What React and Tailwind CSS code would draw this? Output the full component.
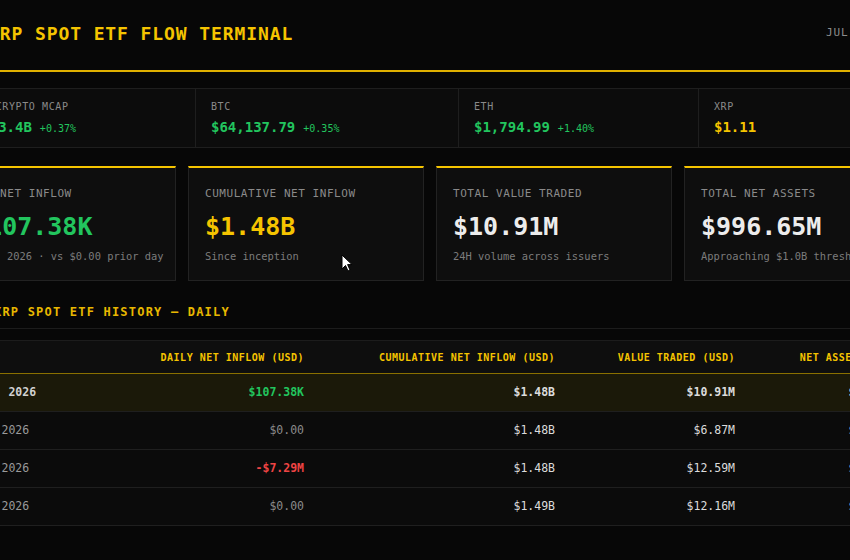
import React from 'react';

const mono = { fontFamily: '"DejaVu Sans Mono", "Liberation Mono", monospace' };

const tickers = [
  { label: 'TOTAL CRYPTO MCAP', value: '$2,413.4B', change: '+0.37%', w: 'w-[254px]', color: 'text-[#22c55e]' },
  { label: 'BTC', value: '$64,137.79', change: '+0.35%', w: 'w-[263px]', color: 'text-[#22c55e]' },
  { label: 'ETH', value: '$1,794.99', change: '+1.40%', w: 'w-[240px]', color: 'text-[#22c55e]' },
  { label: 'XRP', value: '$1.11', change: null, w: 'flex-1', color: 'text-[#f5c400]' },
];

const cards = [
  { label: 'DAILY NET INFLOW', value: '+$107.38K', sub: 'JUL 10, 2026 · vs $0.00 prior day', color: 'text-[#22c55e]' },
  { label: 'CUMULATIVE NET INFLOW', value: '$1.48B', sub: 'Since inception', color: 'text-[#f5c400]' },
  { label: 'TOTAL VALUE TRADED', value: '$10.91M', sub: '24H volume across issuers', color: 'text-[#ececec]' },
  { label: 'TOTAL NET ASSETS', value: '$996.65M', sub: 'Approaching $1.0B threshold', color: 'text-[#ececec]' },
];

const rows = [
  { date: 'JUL 10, 2026', flow: '$107.38K', tone: 'up', cum: '$1.48B', traded: '$10.91M', assets: '$996.65M', latest: true },
  { date: 'JUL 9, 2026', flow: '$0.00', tone: 'flat', cum: '$1.48B', traded: '$6.87M', assets: '$981.20M' },
  { date: 'JUL 8, 2026', flow: '-$7.29M', tone: 'down', cum: '$1.48B', traded: '$12.59M', assets: '$975.44M' },
  { date: 'JUL 7, 2026', flow: '$0.00', tone: 'flat', cum: '$1.49B', traded: '$12.16M', assets: '$990.03M' },
];

const cols = 'grid grid-cols-[150px_230px_251px_180px_169px]';

const flowColor = {
  up: 'text-[#22c55e] font-bold',
  down: 'text-[#ef4444] font-bold',
  flat: 'text-[#8a8a8a]',
};

export default function App() {
  return (
    <div className="relative w-[850px] h-[560px] overflow-hidden bg-[#070707]" style={mono}>
      <div className="w-[980px] -ml-[60px]">
        {/* header */}
        <header className="h-[72px] flex items-center justify-between border-b-2 border-[#e0b000] pb-1">
          <div className="flex items-center gap-4">
            <div className="w-8 h-8 bg-[#f5c400] rounded-sm" />
            <h1 className="text-[18px] font-bold tracking-[0.05em] text-[#f5c400]">XRP SPOT ETF FLOW TERMINAL</h1>
          </div>
          <div className="pr-1 text-[11px] tracking-[0.08em] text-[#8c8c8c]">JUL 10, 2026</div>
        </header>

        {/* ticker strip */}
        <div className="mt-4 h-[60px] flex border border-[#1e1e1e] bg-[#0c0c0c]">
          {tickers.map((t, i) => (
            <div key={t.label} className={`${t.w} px-[15px] pt-[11px] ${i > 0 ? 'border-l border-[#1e1e1e]' : ''}`}>
              <div className="text-[10px] leading-[14px] tracking-[0.06em] text-[#8a8a8a]">{t.label}</div>
              <div className="mt-[3px] h-5 flex items-baseline gap-2 leading-5">
                <span className={`text-[14px] font-bold ${t.color}`}>{t.value}</span>
                {t.change && <span className="text-[10px] text-[#22c55e]">{t.change}</span>}
              </div>
            </div>
          ))}
        </div>

        {/* stat cards */}
        <div className="mt-[18px] grid grid-cols-4 gap-3">
          {cards.map((c) => (
            <div key={c.label} className="h-[115px] bg-[#0e0e0e] border border-[#222] border-t-2 border-t-[#f5c400] px-4 pt-[19px]">
              <div className="text-[11px] leading-[14px] tracking-[0.05em] text-[#8a8a8a]">{c.label}</div>
              <div className={`mt-[11px] text-[25px] leading-[30px] font-bold ${c.color}`}>{c.value}</div>
              <div className="mt-[7px] text-[10.4px] leading-[14px] text-[#7c7c7c] whitespace-nowrap">{c.sub}</div>
            </div>
          ))}
        </div>

        {/* history */}
        <div className="mt-[23px] pb-2 pl-[54px] border-b border-[#1c1c1c]">
          <h2 className="text-[12px] leading-4 font-bold tracking-[0.1em] text-[#e8b800]">XRP SPOT ETF HISTORY — DAILY</h2>
        </div>

        <div className="mt-[11px] border-t border-[#1c1c1c] bg-[#0b0b0b]">
          <div className={`${cols} h-[33px] items-center bg-[#0e0e0e] border-b border-[#8a7000] text-[10px] font-bold tracking-[0.05em] text-[#f5c400]`}>
            <div className="px-[13px]">DATE</div>
            <div className="px-4 text-right">DAILY NET INFLOW (USD)</div>
            <div className="px-4 text-right">CUMULATIVE NET INFLOW (USD)</div>
            <div className="px-4 text-right">VALUE TRADED (USD)</div>
            <div className="px-4 text-right">NET ASSETS (USD)</div>
          </div>
          {rows.map((r) => (
            <div
              key={r.date}
              className={`${cols} h-[38px] items-center border-b border-[#1f1f1f] text-[11.5px] ${r.latest ? 'bg-[#1b1909]' : ''}`}
            >
              <div className={`px-[13px] ${r.latest ? 'font-bold text-[#d0d0d0]' : 'text-[#9a9a9a]'}`}>{r.date}</div>
              <div className={`px-4 text-right ${flowColor[r.tone]}`}>{r.flow}</div>
              <div className={`px-4 text-right text-[#dcdcdc] ${r.latest ? 'font-bold' : ''}`}>{r.cum}</div>
              <div className={`px-4 text-right text-[#dcdcdc] ${r.latest ? 'font-bold' : ''}`}>{r.traded}</div>
              <div className={`px-4 text-right text-[#dcdcdc] ${r.latest ? 'font-bold' : ''}`}>{r.assets}</div>
            </div>
          ))}
        </div>
      </div>

      {/* mouse pointer */}
      <svg className="absolute left-[341px] top-[254px]" width="12" height="18" viewBox="0 0 12 18">
        <path d="M1 1 L1 15 L4.5 11.5 L7 17 L9 16 L6.6 10.6 L11 10.6 Z" fill="#fff" stroke="#000" strokeWidth="1" />
      </svg>
    </div>
  );
}
